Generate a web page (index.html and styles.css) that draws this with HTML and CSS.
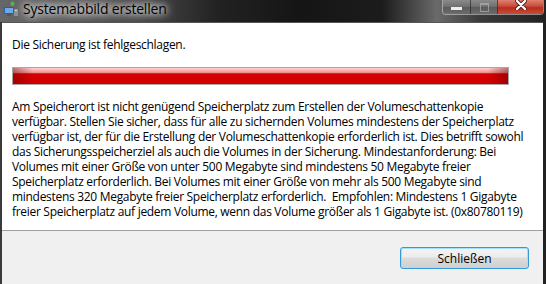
FILE: index.html
```html
<!DOCTYPE html>
<html lang="de">
<head>
    <meta charset="UTF-8">
    <meta name="viewport" content="width=device-width, initial-scale=1.0">
    <title>Systemabbild erstellen</title>
    <link rel="stylesheet" href="styles.css">
</head>
<body>
    <div class="window">
        <div class="titlebar">
            <svg class="app-icon" viewBox="0 0 16 16" width="16" height="16">
                <rect x="1" y="6" width="10" height="7" rx="1" fill="#2a5db0"/>
                <rect x="2" y="7" width="8" height="5" fill="#6fa8e8"/>
                <rect x="4" y="13" width="4" height="2" fill="#555"/>
                <rect x="11" y="8" width="4" height="7" fill="#8a8f96"/>
                <rect x="12" y="9" width="2" height="1" fill="#d0d4d8"/>
                <path d="M8 5 L8 3 L6.5 3 L9.5 0 L12.5 3 L11 3 L11 5 Z" fill="#3cc13c"/>
            </svg>
            <span class="title">Systemabbild erstellen</span>
            <div class="caption-buttons">
                <div class="cap-btn minimize"><span class="glyph-min"></span></div>
                <div class="cap-btn maximize"><span class="glyph-max"></span></div>
                <div class="cap-btn close">
                    <svg viewBox="0 0 12 10" width="12" height="10">
                        <path d="M2 1 L10 9 M10 1 L2 9" stroke="#4a1a14" stroke-width="4" stroke-linecap="round"/>
                        <path d="M2 1 L10 9 M10 1 L2 9" stroke="#fff" stroke-width="2.4" stroke-linecap="round"/>
                    </svg>
                </div>
            </div>
        </div>

        <div class="client">
            <div class="content">
                <p class="headline">Die Sicherung ist fehlgeschlagen.</p>
                <div class="progress"></div>
                <p class="message">Am Speicherort ist nicht genügend Speicherplatz zum Erstellen der Volumeschattenkopie<br>verfügbar. Stellen Sie sicher, dass für alle zu sichernden Volumes mindestens der Speicherplatz<br>verfügbar ist, der für die Erstellung der Volumeschattenkopie erforderlich ist. Dies betrifft sowohl<br>das Sicherungsspeicherziel als auch die Volumes in der Sicherung. Mindestanforderung: Bei<br>Volumes mit einer Größe von unter 500 Megabyte sind mindestens 50 Megabyte freier<br>Speicherplatz erforderlich. Bei Volumes mit einer Größe von mehr als 500 Megabyte sind<br>mindestens 320 Megabyte freier Speicherplatz erforderlich.&nbsp; Empfohlen: Mindestens 1 Gigabyte<br>freier Speicherplatz auf jedem Volume, wenn das Volume größer als 1 Gigabyte ist. (0x80780119)</p>
            </div>
            <div class="footer">
                <button class="btn">Schließen</button>
            </div>
        </div>
    </div>
</body>
</html>
```

FILE: styles.css
```css
/* --- Global Setup --- */
body, html {
    margin: 0;
    padding: 0;
    width: 100%;
    height: 100%;
    overflow: hidden;
    background: #000;
    font-family: 'Open Sans', 'Noto Sans', sans-serif;
}

.window {
    width: 546px;
    height: 284px;
    display: flex;
    flex-direction: column;
    background: linear-gradient(90deg, #3a3a3a 0%, #2a2a2a 30%, #151515 55%, #1c1c1c 70%, #6a6a6a 80%, #3a3a3a 88%, #222 100%);
}

/* --- Title bar --- */
.titlebar {
    height: 22px;
    flex: none;
    display: flex;
    align-items: flex-start;
    background: linear-gradient(90deg, rgba(140,140,140,0.55) 0%, rgba(120,120,120,0.35) 25%, rgba(0,0,0,0) 40%);
}
.app-icon { margin: 1px 0 0 3px; flex: none; }
.title {
    margin-left: 4px;
    font-size: 14px;
    line-height: 18px;
    letter-spacing: -0.2px;
    color: #000;
    text-shadow: 0 0 6px #fff, 0 0 10px rgba(255,255,255,0.9), 0 0 14px rgba(255,255,255,0.7);
}

.caption-buttons {
    margin-left: auto;
    margin-right: 2px;
    display: flex;
    height: 14px;
    border: 1px solid rgba(220,220,220,0.55);
    border-top: none;
    border-radius: 0 0 4px 4px;
    overflow: hidden;
}
.cap-btn {
    height: 14px;
    display: flex;
    align-items: center;
    justify-content: center;
    background: linear-gradient(#8a8a8a, #6e6e6e 50%, #5a5a5a 51%, #6c6c6c);
    border-right: 1px solid rgba(30,30,30,0.6);
}
.minimize { width: 27px; }
.maximize { width: 26px; }
.close {
    width: 45px;
    border-right: none;
    align-items: flex-start;
    background: linear-gradient(#e08070, #c84a38 45%, #b52e1e 55%, #cf4a35);
}
.glyph-min { width: 11px; height: 3px; background: #eee; margin-top: 2px; }
.glyph-max { width: 7px; height: 6px; border: 1px solid #bbb; border-top-width: 2px; opacity: 0.6; }

/* --- Client area --- */
.client {
    flex: 1;
    margin: 0 3px 0 2px;
    display: flex;
    flex-direction: column;
    border-top: 1px solid #555;
}
.content {
    background: #fff;
    padding: 14px 10px 0 10px;
    height: 207px;
    flex: none;
    box-sizing: border-box;
    font-size: 12px;
    line-height: 15px;
    letter-spacing: -0.3px;
    color: #000;
}
.headline { margin: 0; white-space: nowrap; }
.progress {
    margin-top: 15px;
    width: 495px;
    height: 16px;
    border: 1px solid #a8a8a8;
    background:
        linear-gradient(90deg, rgba(110,0,0,0.45), rgba(110,0,0,0) 4%, rgba(110,0,0,0) 96%, rgba(110,0,0,0.45)),
        linear-gradient(#ffd4d4 0%, #f7a5a5 20%, #f08a8a 30%, #d60000 36%, #d40000 100%);
}
.message {
    margin: 14px 0 0 0;
    white-space: nowrap;
}

.footer {
    flex: 1;
    background: #f0f0f0;
    border-top: 1px solid #a0a0a0;
    display: flex;
    justify-content: flex-end;
    align-items: flex-start;
    padding: 16px 14px 0 0;
}
.btn {
    width: 129px;
    height: 22px;
    padding: 0;
    font-family: inherit;
    font-size: 12px;
    color: #000;
    border: 1px solid #3399dd;
    border-radius: 3px;
    box-shadow: inset 0 0 0 1px #a6e0f8;
    background: linear-gradient(#f4f4f4, #ececec 45%, #dcdcdc 50%, #cfcfcf);
}
```
